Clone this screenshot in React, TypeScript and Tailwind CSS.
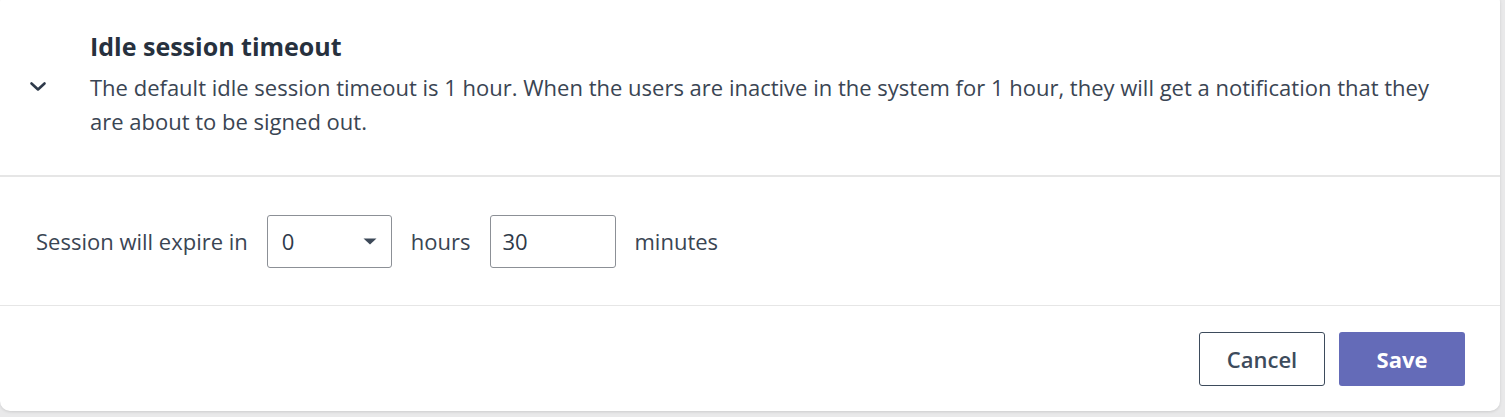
import React from "react";

export default function App() {
  return (
    <div className="w-[1505px] h-[417px] bg-[#e9e9ea] overflow-hidden font-['Open_Sans',_'Noto_Sans',_sans-serif]">
      <div className="w-[1500px] h-[419px] -mt-[8px] bg-white rounded-[10px] shadow-[0_1px_3px_rgba(0,0,0,0.12)] flex flex-col">
        {/* Header */}
        <div className="flex items-start pt-[37px] pb-[37px] border-b-2 border-[#e6e6e6]">
          <div className="w-[90px] pl-[29px] pt-[52px] flex text-[#2e3a4a]">
            <svg width="18" height="11" viewBox="0 0 18 11" fill="none">
              <path d="M2.5 2.5 L9 8.5 L15.5 2.5" stroke="currentColor" strokeWidth="2.6" strokeLinecap="round" strokeLinejoin="round" />
            </svg>
          </div>
          <div className="flex-1 pr-[60px]">
            <div className="text-[25px] leading-[34px] font-bold text-[#27313e]">Idle session timeout</div>
            <p className="mt-[7px] text-[22px] leading-[34px] text-[#3a4553]">
              The default idle session timeout is 1 hour. When the users are inactive in the system for 1 hour, they will get a notification that they are about to be signed out.
            </p>
          </div>
        </div>
        {/* Row */}
        <div className="flex items-center gap-[19px] pl-[36px] pt-[38px] pb-[37px] border-b border-[#e6e6e6] text-[22px] text-[#3a4553]">
          <span>Session will expire in</span>
          <div className="w-[125px] h-[53px] border border-[#8c9096] rounded-[3px] flex items-center justify-between pl-[14px] pr-[14px] text-[#2e3a4a]">
            <span>0</span>
            <svg width="14" height="7" viewBox="0 0 14 7">
              <path d="M0.5 0.5 H13.5 L7 6.5 Z" fill="#3d4958" />
            </svg>
          </div>
          <span>hours</span>
          <div className="w-[126px] h-[53px] border border-[#8c9096] rounded-[3px] flex items-center pl-[12px] text-[#2e3a4a]">
            30
          </div>
          <span>minutes</span>
        </div>
        {/* Footer */}
        <div className="flex justify-end gap-[14px] pt-[26px] pr-[35px]">
          <button className="w-[126px] h-[54px] border border-[#3d4b5c] rounded-[3px] text-[22px] font-semibold text-[#3d4b5c] bg-white">
            Cancel
          </button>
          <button className="w-[126px] h-[54px] rounded-[3px] text-[22px] font-bold text-white bg-[#646bb8]">
            Save
          </button>
        </div>
      </div>
    </div>
  );
}
